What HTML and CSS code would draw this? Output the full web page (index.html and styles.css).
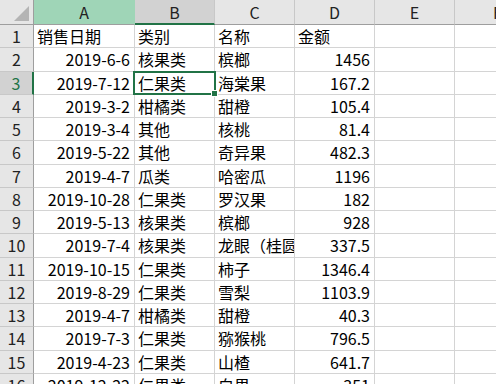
FILE: index.html
```html
<!DOCTYPE html>
<html lang="zh">
<head>
<meta charset="utf-8">
<link rel="stylesheet" href="styles.css">
</head>
<body>
<div class="sheet">
  <div class="corner"><span class="tri"></span></div>
  <div class="ch ch-a">A</div>
  <div class="ch ch-b">B</div>
  <div class="ch">C</div>
  <div class="ch">D</div>
  <div class="ch">E</div>
  <div class="ch ch-f">F</div>

  <div class="rh">1</div><div class="c">销售日期</div><div class="c">类别</div><div class="c">名称</div><div class="c">金额</div><div class="c"></div><div class="c"></div>
  <div class="rh">2</div><div class="c r">2019-6-6</div><div class="c">核果类</div><div class="c">槟榔</div><div class="c r">1456</div><div class="c"></div><div class="c"></div>
  <div class="rh rh-sel">3</div><div class="c r">2019-7-12</div><div class="c active">仁果类<span class="sel"><span class="handle"></span></span></div><div class="c">海棠果</div><div class="c r">167.2</div><div class="c"></div><div class="c"></div>
  <div class="rh">4</div><div class="c r">2019-3-2</div><div class="c">柑橘类</div><div class="c">甜橙</div><div class="c r">105.4</div><div class="c"></div><div class="c"></div>
  <div class="rh">5</div><div class="c r">2019-3-4</div><div class="c">其他</div><div class="c">核桃</div><div class="c r">81.4</div><div class="c"></div><div class="c"></div>
  <div class="rh">6</div><div class="c r">2019-5-22</div><div class="c">其他</div><div class="c">奇异果</div><div class="c r">482.3</div><div class="c"></div><div class="c"></div>
  <div class="rh">7</div><div class="c r">2019-4-7</div><div class="c">瓜类</div><div class="c">哈密瓜</div><div class="c r">1196</div><div class="c"></div><div class="c"></div>
  <div class="rh">8</div><div class="c r">2019-10-28</div><div class="c">仁果类</div><div class="c">罗汉果</div><div class="c r">182</div><div class="c"></div><div class="c"></div>
  <div class="rh">9</div><div class="c r">2019-5-13</div><div class="c">核果类</div><div class="c">槟榔</div><div class="c r">928</div><div class="c"></div><div class="c"></div>
  <div class="rh">10</div><div class="c r">2019-7-4</div><div class="c">核果类</div><div class="c">龙眼（桂圆）</div><div class="c r">337.5</div><div class="c"></div><div class="c"></div>
  <div class="rh">11</div><div class="c r">2019-10-15</div><div class="c">仁果类</div><div class="c">柿子</div><div class="c r">1346.4</div><div class="c"></div><div class="c"></div>
  <div class="rh">12</div><div class="c r">2019-8-29</div><div class="c">仁果类</div><div class="c">雪梨</div><div class="c r">1103.9</div><div class="c"></div><div class="c"></div>
  <div class="rh">13</div><div class="c r">2019-4-7</div><div class="c">柑橘类</div><div class="c">甜橙</div><div class="c r">40.3</div><div class="c"></div><div class="c"></div>
  <div class="rh">14</div><div class="c r">2019-7-3</div><div class="c">仁果类</div><div class="c">猕猴桃</div><div class="c r">796.5</div><div class="c"></div><div class="c"></div>
  <div class="rh">15</div><div class="c r">2019-4-23</div><div class="c">仁果类</div><div class="c">山楂</div><div class="c r">641.7</div><div class="c"></div><div class="c"></div>
  <div class="rh">16</div><div class="c r">2019-12-22</div><div class="c">仁果类</div><div class="c">白果</div><div class="c r">351</div><div class="c"></div><div class="c"></div>
</div>
</body>
</html>
```
FILE: styles.css
```css
html, body {
  margin: 0;
  padding: 0;
  background: #ffffff;
  overflow: hidden;
  width: 496px;
  height: 384px;
}
.sheet {
  display: grid;
  grid-template-columns: 34px 101px 80px 80px 80px 80px 80px;
  grid-template-rows: 25px repeat(16, 23.25px);
  font-family: "Noto Sans CJK SC", "Noto Sans", sans-serif;
  font-size: 16px;
  color: #000;
  width: 535px;
}
.corner {
  background: #e6e6e6;
  border-right: 1px solid #9e9e9e;
  border-bottom: 1px solid #9e9e9e;
  box-sizing: border-box;
  position: relative;
}
.tri {
  position: absolute;
  right: 4px;
  bottom: 3px;
  width: 0;
  height: 0;
  border-left: 15px solid transparent;
  border-bottom: 15px solid #b4b4b4;
}
.ch {
  background: #e6e6e6;
  border-right: 1px solid #c8c8c8;
  border-bottom: 1px solid #9e9e9e;
  box-sizing: border-box;
  display: flex;
  align-items: center;
  justify-content: center;
  color: #222;
  line-height: 1;
}
.ch-a {
  background: #9fd5b7;
  border-right-color: #9fd5b7;
}
.ch-b {
  background: #d2d2d2;
  border-bottom: 2px solid #217346;
}
.ch-f {
  justify-content: flex-start;
  padding-left: 38px;
}
.rh {
  background: #e6e6e6;
  border-right: 1px solid #9e9e9e;
  border-bottom: 1px solid #c8c8c8;
  box-sizing: border-box;
  display: flex;
  align-items: center;
  justify-content: center;
  color: #222;
  line-height: 1;
}
.rh-sel {
  background: #d2d2d2;
  border-right: 2px solid #217346;
  color: #217346;
}
.c {
  border-right: 1px solid #d4d4d4;
  border-bottom: 1px solid #d4d4d4;
  box-sizing: border-box;
  display: flex;
  align-items: center;
  padding: 0 3px 0 3px;
  white-space: nowrap;
  overflow: hidden;
  line-height: 1;
}
.c.r {
  justify-content: flex-end;
  padding-right: 4px;
}
.c.active {
  position: relative;
  overflow: visible;
  z-index: 2;
}
.sel {
  position: absolute;
  left: -2px;
  top: -1px;
  right: -2px;
  bottom: -1px;
  border: 2px solid #217346;
  box-sizing: border-box;
}
.handle {
  position: absolute;
  right: -4px;
  bottom: -4px;
  width: 5px;
  height: 5px;
  background: #217346;
  border: 1px solid #fff;
}
```
